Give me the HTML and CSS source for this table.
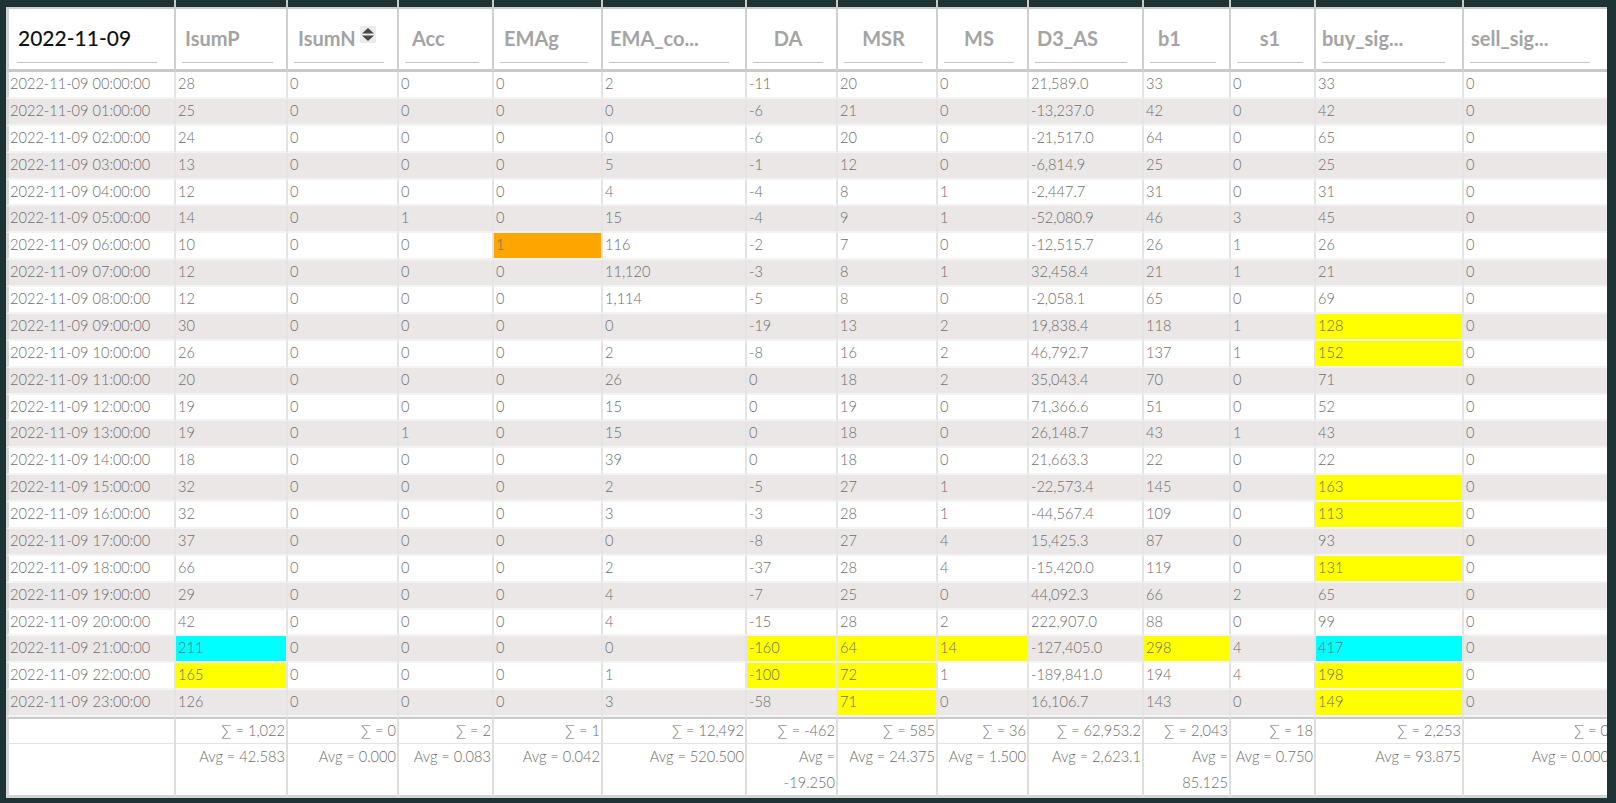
FILE: index.html
```html
<!DOCTYPE html>
<html lang="en">
<head>
<meta charset="utf-8">
<title>2022-11-09</title>
<link rel="stylesheet" href="styles.css">
</head>
<body>
<div class="wrap">
<div class="sheet" role="table">
  <div class="r band"><div class="c"></div><div class="c"></div><div class="c"></div><div class="c"></div><div class="c"></div><div class="c"></div><div class="c"></div><div class="c"></div><div class="c"></div><div class="c"></div><div class="c"></div><div class="c"></div><div class="c"></div><div class="c"></div></div>
  <div class="r head" role="row">
    <div class="c"><div class="flt f0">2022-11-09</div></div>
    <div class="c"><div class="flt i3">IsumP</div></div>
    <div class="c"><div class="flt i4">IsumN<span class="sort"><svg width="16" height="17" viewBox="0 0 16 17"><polygon points="2,7.5 8,2 14,7.5" fill="#474747"/><polygon points="2,9.5 8,15 14,9.5" fill="#474747"/></svg></span></div></div>
    <div class="c"><div class="flt i7">Acc</div></div>
    <div class="c"><div class="flt i4">EMAg</div></div>
    <div class="c"><div class="flt i1 mr16">EMA_co...</div></div>
    <div class="c"><div class="flt ctr">DA</div></div>
    <div class="c"><div class="flt ctr">MSR</div></div>
    <div class="c"><div class="flt ctr">MS</div></div>
    <div class="c"><div class="flt i2 mr15">D3_AS</div></div>
    <div class="c"><div class="flt i8">b1</div></div>
    <div class="c"><div class="flt ctr mr11">s1</div></div>
    <div class="c"><div class="flt mr17">buy_sig...</div></div>
    <div class="c"><div class="flt i1 mrl">sell_sig...</div></div>
  </div>

  <div class="r" role="row"><div class="c">2022-11-09 00:00:00</div><div class="c">28</div><div class="c">0</div><div class="c">0</div><div class="c">0</div><div class="c">2</div><div class="c">-11</div><div class="c">20</div><div class="c">0</div><div class="c">21,589.0</div><div class="c">33</div><div class="c">0</div><div class="c">33</div><div class="c">0</div></div>
  <div class="r alt" role="row"><div class="c">2022-11-09 01:00:00</div><div class="c">25</div><div class="c">0</div><div class="c">0</div><div class="c">0</div><div class="c">0</div><div class="c">-6</div><div class="c">21</div><div class="c">0</div><div class="c">-13,237.0</div><div class="c">42</div><div class="c">0</div><div class="c">42</div><div class="c">0</div></div>
  <div class="r" role="row"><div class="c">2022-11-09 02:00:00</div><div class="c">24</div><div class="c">0</div><div class="c">0</div><div class="c">0</div><div class="c">0</div><div class="c">-6</div><div class="c">20</div><div class="c">0</div><div class="c">-21,517.0</div><div class="c">64</div><div class="c">0</div><div class="c">65</div><div class="c">0</div></div>
  <div class="r alt" role="row"><div class="c">2022-11-09 03:00:00</div><div class="c">13</div><div class="c">0</div><div class="c">0</div><div class="c">0</div><div class="c">5</div><div class="c">-1</div><div class="c">12</div><div class="c">0</div><div class="c">-6,814.9</div><div class="c">25</div><div class="c">0</div><div class="c">25</div><div class="c">0</div></div>
  <div class="r" role="row"><div class="c">2022-11-09 04:00:00</div><div class="c">12</div><div class="c">0</div><div class="c">0</div><div class="c">0</div><div class="c">4</div><div class="c">-4</div><div class="c">8</div><div class="c">1</div><div class="c">-2,447.7</div><div class="c">31</div><div class="c">0</div><div class="c">31</div><div class="c">0</div></div>
  <div class="r alt" role="row"><div class="c">2022-11-09 05:00:00</div><div class="c">14</div><div class="c">0</div><div class="c">1</div><div class="c">0</div><div class="c">15</div><div class="c">-4</div><div class="c">9</div><div class="c">1</div><div class="c">-52,080.9</div><div class="c">46</div><div class="c">3</div><div class="c">45</div><div class="c">0</div></div>
  <div class="r" role="row"><div class="c">2022-11-09 06:00:00</div><div class="c">10</div><div class="c">0</div><div class="c">0</div><div class="c ho">1</div><div class="c">116</div><div class="c">-2</div><div class="c">7</div><div class="c">0</div><div class="c">-12,515.7</div><div class="c">26</div><div class="c">1</div><div class="c">26</div><div class="c">0</div></div>
  <div class="r alt" role="row"><div class="c">2022-11-09 07:00:00</div><div class="c">12</div><div class="c">0</div><div class="c">0</div><div class="c">0</div><div class="c">11,120</div><div class="c">-3</div><div class="c">8</div><div class="c">1</div><div class="c">32,458.4</div><div class="c">21</div><div class="c">1</div><div class="c">21</div><div class="c">0</div></div>
  <div class="r" role="row"><div class="c">2022-11-09 08:00:00</div><div class="c">12</div><div class="c">0</div><div class="c">0</div><div class="c">0</div><div class="c">1,114</div><div class="c">-5</div><div class="c">8</div><div class="c">0</div><div class="c">-2,058.1</div><div class="c">65</div><div class="c">0</div><div class="c">69</div><div class="c">0</div></div>
  <div class="r alt" role="row"><div class="c">2022-11-09 09:00:00</div><div class="c">30</div><div class="c">0</div><div class="c">0</div><div class="c">0</div><div class="c">0</div><div class="c">-19</div><div class="c">13</div><div class="c">2</div><div class="c">19,838.4</div><div class="c">118</div><div class="c">1</div><div class="c hy">128</div><div class="c">0</div></div>
  <div class="r" role="row"><div class="c">2022-11-09 10:00:00</div><div class="c">26</div><div class="c">0</div><div class="c">0</div><div class="c">0</div><div class="c">2</div><div class="c">-8</div><div class="c">16</div><div class="c">2</div><div class="c">46,792.7</div><div class="c">137</div><div class="c">1</div><div class="c hy">152</div><div class="c">0</div></div>
  <div class="r alt" role="row"><div class="c">2022-11-09 11:00:00</div><div class="c">20</div><div class="c">0</div><div class="c">0</div><div class="c">0</div><div class="c">26</div><div class="c">0</div><div class="c">18</div><div class="c">2</div><div class="c">35,043.4</div><div class="c">70</div><div class="c">0</div><div class="c">71</div><div class="c">0</div></div>
  <div class="r" role="row"><div class="c">2022-11-09 12:00:00</div><div class="c">19</div><div class="c">0</div><div class="c">0</div><div class="c">0</div><div class="c">15</div><div class="c">0</div><div class="c">19</div><div class="c">0</div><div class="c">71,366.6</div><div class="c">51</div><div class="c">0</div><div class="c">52</div><div class="c">0</div></div>
  <div class="r alt" role="row"><div class="c">2022-11-09 13:00:00</div><div class="c">19</div><div class="c">0</div><div class="c">1</div><div class="c">0</div><div class="c">15</div><div class="c">0</div><div class="c">18</div><div class="c">0</div><div class="c">26,148.7</div><div class="c">43</div><div class="c">1</div><div class="c">43</div><div class="c">0</div></div>
  <div class="r" role="row"><div class="c">2022-11-09 14:00:00</div><div class="c">18</div><div class="c">0</div><div class="c">0</div><div class="c">0</div><div class="c">39</div><div class="c">0</div><div class="c">18</div><div class="c">0</div><div class="c">21,663.3</div><div class="c">22</div><div class="c">0</div><div class="c">22</div><div class="c">0</div></div>
  <div class="r alt" role="row"><div class="c">2022-11-09 15:00:00</div><div class="c">32</div><div class="c">0</div><div class="c">0</div><div class="c">0</div><div class="c">2</div><div class="c">-5</div><div class="c">27</div><div class="c">1</div><div class="c">-22,573.4</div><div class="c">145</div><div class="c">0</div><div class="c hy">163</div><div class="c">0</div></div>
  <div class="r" role="row"><div class="c">2022-11-09 16:00:00</div><div class="c">32</div><div class="c">0</div><div class="c">0</div><div class="c">0</div><div class="c">3</div><div class="c">-3</div><div class="c">28</div><div class="c">1</div><div class="c">-44,567.4</div><div class="c">109</div><div class="c">0</div><div class="c hy">113</div><div class="c">0</div></div>
  <div class="r alt" role="row"><div class="c">2022-11-09 17:00:00</div><div class="c">37</div><div class="c">0</div><div class="c">0</div><div class="c">0</div><div class="c">0</div><div class="c">-8</div><div class="c">27</div><div class="c">4</div><div class="c">15,425.3</div><div class="c">87</div><div class="c">0</div><div class="c">93</div><div class="c">0</div></div>
  <div class="r" role="row"><div class="c">2022-11-09 18:00:00</div><div class="c">66</div><div class="c">0</div><div class="c">0</div><div class="c">0</div><div class="c">2</div><div class="c">-37</div><div class="c">28</div><div class="c">4</div><div class="c">-15,420.0</div><div class="c">119</div><div class="c">0</div><div class="c hy">131</div><div class="c">0</div></div>
  <div class="r alt" role="row"><div class="c">2022-11-09 19:00:00</div><div class="c">29</div><div class="c">0</div><div class="c">0</div><div class="c">0</div><div class="c">4</div><div class="c">-7</div><div class="c">25</div><div class="c">0</div><div class="c">44,092.3</div><div class="c">66</div><div class="c">2</div><div class="c">65</div><div class="c">0</div></div>
  <div class="r" role="row"><div class="c">2022-11-09 20:00:00</div><div class="c">42</div><div class="c">0</div><div class="c">0</div><div class="c">0</div><div class="c">4</div><div class="c">-15</div><div class="c">28</div><div class="c">2</div><div class="c">222,907.0</div><div class="c">88</div><div class="c">0</div><div class="c">99</div><div class="c">0</div></div>
  <div class="r alt" role="row"><div class="c">2022-11-09 21:00:00</div><div class="c hc">211</div><div class="c">0</div><div class="c">0</div><div class="c">0</div><div class="c">0</div><div class="c hy">-160</div><div class="c hy">64</div><div class="c hy">14</div><div class="c">-127,405.0</div><div class="c hy">298</div><div class="c">4</div><div class="c hc">417</div><div class="c">0</div></div>
  <div class="r" role="row"><div class="c">2022-11-09 22:00:00</div><div class="c hy">165</div><div class="c">0</div><div class="c">0</div><div class="c">0</div><div class="c">1</div><div class="c hy">-100</div><div class="c hy">72</div><div class="c">1</div><div class="c">-189,841.0</div><div class="c">194</div><div class="c">4</div><div class="c hy">198</div><div class="c">0</div></div>
  <div class="r alt" role="row"><div class="c">2022-11-09 23:00:00</div><div class="c">126</div><div class="c">0</div><div class="c">0</div><div class="c">0</div><div class="c">3</div><div class="c">-58</div><div class="c hy">71</div><div class="c">0</div><div class="c">16,106.7</div><div class="c">143</div><div class="c">0</div><div class="c hy">149</div><div class="c">0</div></div>

  <div class="r sum" role="row"><div class="c"></div><div class="c">∑ = 1,022</div><div class="c">∑ = 0</div><div class="c">∑ = 2</div><div class="c">∑ = 1</div><div class="c">∑ = 12,492</div><div class="c">∑ = -462</div><div class="c">∑ = 585</div><div class="c">∑ = 36</div><div class="c">∑ = 62,953.2</div><div class="c">∑ = 2,043</div><div class="c">∑ = 18</div><div class="c">∑ = 2,253</div><div class="c">∑ = 0</div></div>
  <div class="r avg" role="row"><div class="c"></div><div class="c">Avg = 42.583</div><div class="c">Avg = 0.000</div><div class="c">Avg = 0.083</div><div class="c">Avg = 0.042</div><div class="c">Avg = 520.500</div><div class="c">Avg = -19.250</div><div class="c">Avg = 24.375</div><div class="c">Avg = 1.500</div><div class="c">Avg = 2,623.1</div><div class="c">Avg = 85.125</div><div class="c">Avg = 0.750</div><div class="c">Avg = 93.875</div><div class="c">Avg = 0.000</div></div>
</div>
</div>
</body>
</html>
```

FILE: styles.css
```css
html, body {
  margin: 0;
  padding: 0;
  height: 100%;
}

body {
  background: #1e3333;
  overflow: hidden;
  font-family: Lato, "Noto Sans", sans-serif;
}

.wrap {
  margin-left: 6px;
  width: 1601px;
  height: 803px;
  overflow: hidden;
}

.sheet {
  display: grid;
  width: 1606px;
  grid-template-columns: 170px 112px 111px 95px 109px 144px 91px 100px 91px 115px 87px 85px 148px 148px;
}

.r {
  display: contents;
}

.c {
  box-sizing: border-box;
  border-right: 2px solid #e4e4e4;
  height: 26.875px;
  border-bottom: 2px solid #f3f3f3;
  line-height: 24.875px;
  padding-left: 2px;
  font-size: 14.6px;
  font-weight: 300;
  color: #6e6e6e;
  white-space: nowrap;
  overflow: hidden;
  background: #ffffff;
}

.r > .c:first-child {
  border-left: 3px solid #d6d6d6;
  padding-left: 1px;
}

.r.alt > .c {
  background: #eae7e6;
}

.r > .c.hy { background: #ffff00; }
.r > .c.hc { background: #00ffff; }
.r > .c.ho { background: #ffa500; }

/* top dark band with column rules */
.band > .c,
.band > .c:first-child {
  height: 7px;
  background: #1e3333;
  border-bottom: 0;
  border-left: 0;
  border-right: 2px solid #c9c9c9;
  padding: 0;
}

/* header */
.head > .c {
  height: 65px;
  border-top: 2px solid #cdcdcd;
  border-bottom: 3px solid #c9c9c9;
  border-right-color: #cfcfcf;
  padding: 17px 0 0 0;
  line-height: normal;
}

.head > .c:first-child {
  border-left-color: #d2d2d2;
  padding-left: 0;
}

.flt {
  margin: 0 13px 0 6px;
  padding: 0 0 12px 0;
  height: 24px;
  line-height: 24px;
  border-bottom: 1px solid #c6c6c6;
  font-size: 20px;
  font-weight: 700;
  color: #a4a4a4;
  white-space: nowrap;
  overflow: hidden;
}

.flt.f0 {
  margin: 0 17px 0 8px;
  padding-left: 1px;
  font-size: 21px;
  color: #111111;
  font-weight: 500;
}

.i1 { padding-left: 1px; }
.i2 { padding-left: 2px; }
.i3 { padding-left: 3px; }
.i4 { padding-left: 4px; }
.i7 { padding-left: 7px; }
.i8 { padding-left: 8px; }
.ctr { text-align: center; }
.flt.mr11 { margin-right: 11px; }
.flt.mr15 { margin-right: 15px; }
.flt.mr16 { margin-right: 16px; }
.flt.mr17 { margin-right: 17px; }
.flt.mrl { margin-right: 20px; }

.sort {
  display: inline-block;
  vertical-align: top;
  width: 16px;
  height: 17px;
  margin: 0 0 0 4px;
  background: #ebebeb;
}

.sort svg {
  display: block;
}

/* footer */
.sum > .c {
  height: 27px;
  border-top: 2px solid #c9c9c9;
  border-bottom: 1px solid #e3e3e3;
  border-right-color: #dedede;
  line-height: 24px;
  text-align: right;
  padding: 0 1px 0 0;
  background: #ffffff;
}

.avg > .c {
  height: 54px;
  border-bottom: 3px solid #d4d4d4;
  border-right-color: #dedede;
  line-height: 25.5px;
  text-align: right;
  padding: 0 1px 0 0;
  white-space: normal;
  background: #ffffff;
}
```
